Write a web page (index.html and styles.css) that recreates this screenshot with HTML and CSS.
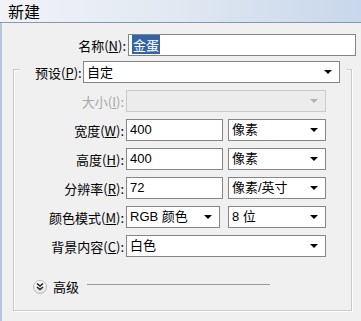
FILE: index.html
```html
<!DOCTYPE html>
<html lang="zh-CN">
<head>
    <meta charset="UTF-8">
    <meta name="viewport" content="width=device-width, initial-scale=1.0">
    <title>新建</title>
    <link rel="stylesheet" href="styles.css">
</head>
<body>

<div class="window">
    <div class="titlebar">新建</div>

    <div class="dialog">
        <!-- 名称 -->
        <div class="row name-row">
            <label class="label">名称(<u>N</u>):</label>
            <div class="field name-field"><span class="selected">金蛋</span></div>
        </div>

        <!-- 预设分组 -->
        <div class="group">
            <div class="preset-row">
                <label class="preset-label">预设(<u>P</u>):</label>
                <div class="field select preset-select">自定</div>
            </div>

            <div class="row">
                <label class="label disabled">大小(<u>I</u>):</label>
                <div class="field select off w-full"></div>
            </div>
            <div class="row">
                <label class="label">宽度(<u>W</u>):</label>
                <div class="field w-num">400</div>
                <div class="field select w-unit">像素</div>
            </div>
            <div class="row">
                <label class="label">高度(<u>H</u>):</label>
                <div class="field w-num">400</div>
                <div class="field select w-unit">像素</div>
            </div>
            <div class="row">
                <label class="label">分辨率(<u>R</u>):</label>
                <div class="field w-num">72</div>
                <div class="field select w-unit">像素/英寸</div>
            </div>
            <div class="row">
                <label class="label">颜色模式(<u>M</u>):</label>
                <div class="field select w-mode">RGB 颜色</div>
                <div class="field select w-unit gap8">8 位</div>
            </div>
            <div class="row">
                <label class="label">背景内容(<u>C</u>):</label>
                <div class="field select w-full">白色</div>
            </div>

            <!-- 高级 -->
            <div class="advanced">
                <span class="expand">
                    <svg width="10" height="10" viewBox="0 0 10 10">
                        <path d="M2 1.5 L5 4 L8 1.5 M2 5 L5 7.5 L8 5" fill="none" stroke="#222" stroke-width="1.6"/>
                    </svg>
                </span>
                <span class="adv-text">高级</span>
                <span class="adv-line"></span>
            </div>
        </div>
    </div>
</div>

</body>
</html>
```

FILE: styles.css
```css
body {
    margin: 0;
    padding: 0;
    font-family: "Noto Sans CJK SC", "Liberation Sans", sans-serif;
    font-size: 13px;
    color: #000;
    background-color: #f0f0f0;
}
.window {
    width: 361px;
    height: 321px;
    overflow: hidden;
}
.titlebar {
    height: 23px;
    line-height: 22px;
    padding-left: 8px;
    font-size: 16px;
    background: linear-gradient(to right, #f1f3f7 0%, #e2e9f2 45%, #c8d7eb 100%);
    border-bottom: 1px solid #8498b6;
    box-sizing: border-box;
}
.dialog {
    height: 298px;
    border-left: 2px solid #b4c5dc;
    background-color: #f0f0f0;
    padding-top: 11px;
    box-sizing: border-box;
}
.row {
    display: flex;
    align-items: center;
    height: 22px;
    margin-top: 7px;
}
.label {
    width: 110px;
    text-align: right;
    padding-right: 2px;
    white-space: nowrap;
}
.label.disabled {
    color: #a7a7a7;
}
.name-row {
    margin-top: 0;
}
.name-row .label {
    width: 124px;
}
.field {
    height: 22px;
    box-sizing: border-box;
    border: 1px solid #858585;
    background: #fff;
    padding-left: 3px;
    line-height: 19px;
    font-family: "Liberation Sans", "Noto Sans CJK SC", sans-serif;
    font-size: 13px;
    white-space: nowrap;
    position: relative;
}
.name-field {
    width: 228px;
}
.selected {
    background: #3464a6;
    color: #fff;
    padding: 0 1px;
    font-family: "Noto Sans CJK SC", sans-serif;
}
.select::after {
    content: "";
    position: absolute;
    right: 7px;
    top: 8px;
    border-left: 4px solid transparent;
    border-right: 4px solid transparent;
    border-top: 4px solid #000;
}
.select.off {
    background: #ececec;
    border-color: #cacaca;
}
.select.off::after {
    border-top-color: #b0b0b0;
}

/* 分组框 */
.group {
    margin: 13px 0 0 11px;
    width: 339px;
    height: 242px;
    box-sizing: border-box;
    border: 1px solid #c9c9c9;
    box-shadow: inset 1px 1px 0 #fff, 1px 1px 0 #fff;
}
.preset-row {
    display: flex;
    align-items: center;
    margin: -9px 0 0 6px;
    padding: 0 6px 0 15px;
    width: 306px;
    background: #f0f0f0;
}
.preset-label {
    width: 43px;
    margin-right: 5px;
    white-space: nowrap;
}
.preset-select {
    width: 257px;
    font-family: "Noto Sans CJK SC", sans-serif;
}
.group .row:first-of-type {
    margin-top: 8px;
}
.w-full {
    width: 200px;
}
.w-num {
    width: 97px;
}
.w-unit {
    width: 98px;
    margin-left: 5px;
}
.w-mode {
    width: 94px;
}
.gap8 {
    margin-left: 8px;
}

/* 高级 */
.advanced {
    display: flex;
    align-items: center;
    margin: 20px 0 0 19px;
}
.expand {
    width: 14px;
    height: 14px;
    border-radius: 50%;
    border: 1px solid #b8b8b8;
    background: linear-gradient(#ffffff, #e4e4e4);
    box-sizing: border-box;
    display: flex;
    align-items: center;
    justify-content: center;
}
.adv-text {
    margin-left: 6px;
}
.adv-line {
    width: 183px;
    height: 1px;
    background: #9a9a9a;
    margin-left: 8px;
    margin-top: -5px;
}
```
